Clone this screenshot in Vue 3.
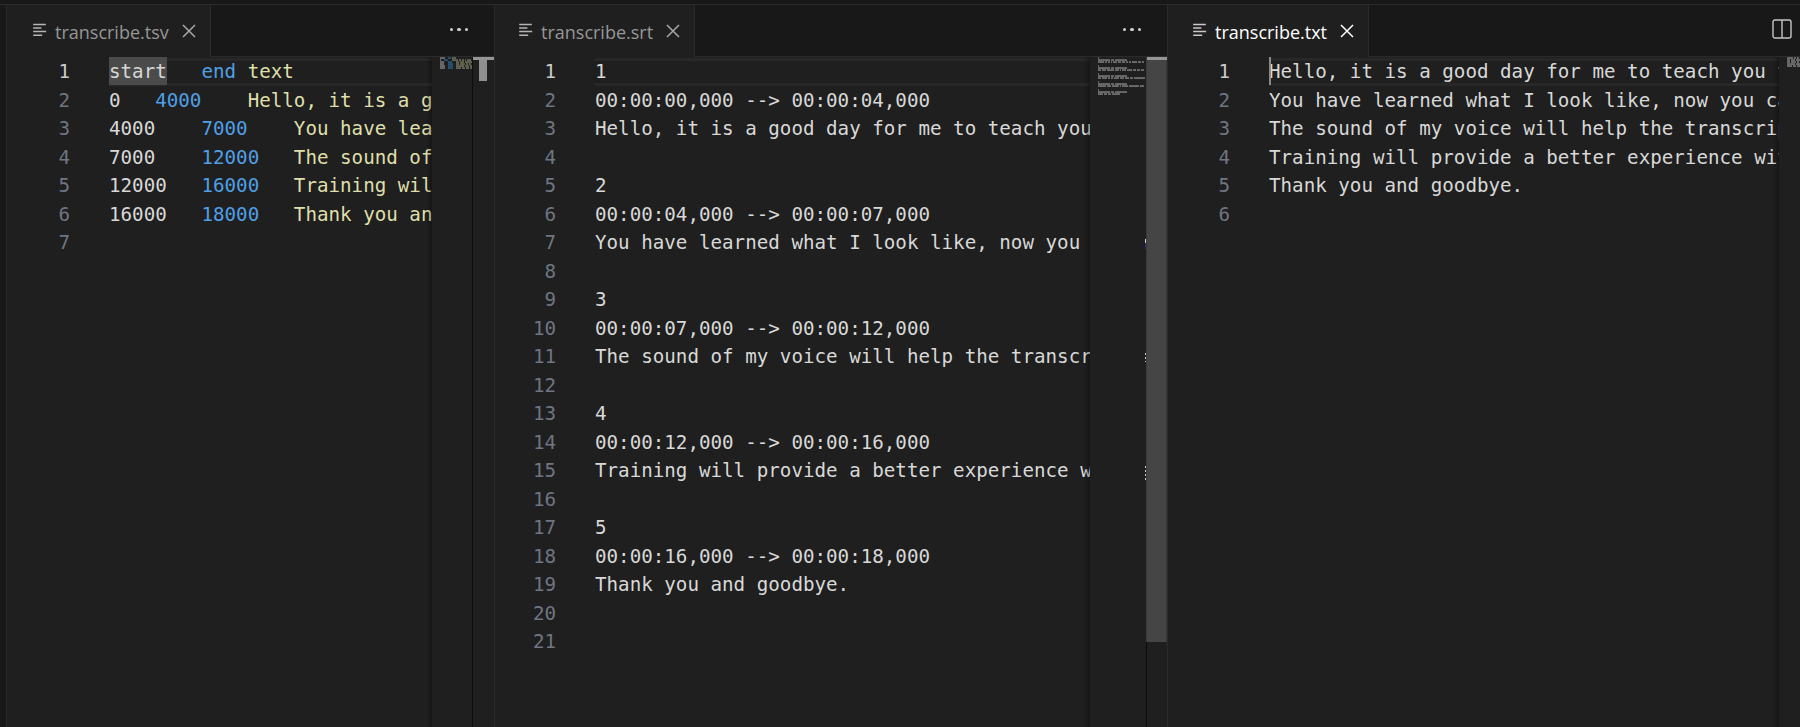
<script setup>
const speech = [
  'Hello, it is a good day for me to teach you to transcribe your voice',
  'You have learned what I look like, now you can hear how I sound',
  'The sound of my voice will help the transcription service learn',
  'Training will provide a better experience with your own data',
  'Thank you and goodbye.'
]
const times = [
  ['0', '4000'],
  ['4000', '7000'],
  ['7000', '12000'],
  ['12000', '16000'],
  ['16000', '18000']
]
const stamp = (ms) => `00:00:${String(ms / 1000).padStart(2, '0')},000`
const tsv = [
  [['start\t', 'w'], ['end', 'b'], ['\t', 'w'], ['text', 'y']],
  ...times.map((t, i) => [[t[0] + '\t', 'w'], [t[1], 'b'], ['\t', 'w'], [speech[i], 'y']]),
  []
]
const plain = (l) => (l ? [[l, 'w']] : [])
const srt = []
times.forEach((t, i) => {
  srt.push(plain(String(i + 1)))
  srt.push(plain(`${stamp(+t[0])} --> ${stamp(+t[1])}`))
  srt.push(plain(speech[i]))
  srt.push([])
})
srt.push([])
const txt = [...speech.map(plain), []]

const panes = [
  { name: 'transcribe.tsv', lines: tsv, active: false, selection: 'sel', kind: 'tsv', scroll: 'small', mapW: 32 },
  { name: 'transcribe.srt', lines: srt, active: false, selection: 'line', kind: 'srt', scroll: 'tall', mapW: 47 },
  { name: 'transcribe.txt', lines: txt, active: true, selection: 'caret', kind: 'txt', scroll: 'none', mapW: 13 }
]
const mapColor = { w: '#a8a8a8', b: '#2f78b0', y: '#98987c' }
function mapBars(pane) {
  const out = []
  pane.lines.forEach((line, row) => {
    let col = 0
    line.forEach(([text, tone]) => {
      for (const ch of text) {
        if (ch === '\t') {
          col += 4 - (col % 4)
        } else {
          if (ch !== ' ' && col < pane.mapW) {
            out.push({ x: col, y: 0.4 + row * 2, c: mapColor[tone] })
          }
          col += 1
        }
      }
    })
  })
  return out
}
</script>

<template>
  <div class="window">
    <section v-for="p in panes" :key="p.name" class="pane" :class="[p.kind, { focused: p.active }]">
      <header class="tabbar">
        <div class="tab" :class="{ active: p.active }">
          <svg class="file" width="16" height="16" viewBox="0 0 16 16" aria-hidden="true">
            <path d="M1.2 1.5h12.6M1.2 5h8.2M1.2 8.5h13M1.2 12.2h9" stroke="currentColor" stroke-width="1.6" fill="none" />
          </svg>
          <span class="tab-name">{{ p.name }}</span>
          <svg class="close" width="16" height="16" viewBox="0 0 16 16" aria-hidden="true">
            <path d="M2 2l12 12M14 2L2 14" stroke="currentColor" stroke-width="1.5" fill="none" />
          </svg>
        </div>
        <div class="spacer"></div>
        <svg v-if="p.active" class="split" width="20" height="20" viewBox="0 0 20 20" aria-hidden="true">
          <rect x="1" y="1" width="18" height="18" rx="2" stroke="currentColor" stroke-width="1.4" fill="none" />
          <path d="M10 1v18" stroke="currentColor" stroke-width="1.4" />
        </svg>
        <div v-else class="more" aria-hidden="true"><i></i><i></i><i></i></div>
      </header>
      <div class="body">
        <div class="editor">
          <div v-for="(line, i) in p.lines" :key="i" class="row" :class="{ current: i === 0 }">
            <span class="num">{{ i + 1 }}</span>
            <span class="code"><template v-if="i === 0 && p.selection === 'sel'"><mark class="sel">start</mark>{{ '\t' }}<span class="b">end</span>{{ '\t' }}<span class="y">text</span></template><template v-else><i v-if="i === 0 && p.selection === 'caret'" class="caret"></i><span v-for="(s, k) in line" :key="k" :class="s[1]">{{ s[0] }}</span></template></span>
          </div>
        </div>
        <aside class="minimap">
          <svg class="mini" :width="p.mapW" height="50" aria-hidden="true">
            <rect v-for="(b, i) in mapBars(p)" :key="i" :x="b.x" :y="b.y" width="0.8" height="1.3" :fill="b.c" />
          </svg>
          <template v-if="p.kind === 'srt'">
            <i class="artefact a1"></i><i class="artefact a2"></i><i class="artefact a3"></i>
          </template>
        </aside>
        <div v-if="p.scroll !== 'none'" class="scroll">
          <div class="cap"></div>
          <div v-if="p.scroll === 'small'" class="thumb-small"></div>
          <div v-else class="thumb-tall"></div>
        </div>
      </div>
    </section>
  </div>
</template>

<style>
html, body { margin: 0; background: #181818; overflow: hidden; }
</style>

<style scoped>
.window {
  display: flex;
  width: 1800px;
  height: 727px;
  box-sizing: border-box;
  padding-top: 4px;
  background: #181818;
  position: relative;
}
.window::before {
  content: "";
  position: absolute;
  left: 0;
  right: 0;
  top: 4px;
  height: 1px;
  background: #2b2b2b;
}
.pane {
  display: flex;
  flex-direction: column;
  height: 723px;
  min-width: 0;
  box-sizing: border-box;
  border-left: 1px solid #2b2b2b;
  --gutter: 102px;
  --editor: 425px;
  --map: 40px;
  --tab-pad: 25px;
}
.tsv { width: 488px; margin-left: 6px; }
.srt { width: 673px; --gutter: 100px; --editor: 595px; --map: 56px; --tab-pad: 23px; }
.txt { flex: 1; --gutter: 101px; --editor: 611px; --map: 21px; --tab-pad: 24px; }
.tabbar {
  display: flex;
  align-items: stretch;
  height: 53px;
  box-sizing: border-box;
  background: #181818;
  border-bottom: 1px solid #2b2b2b;
  flex: none;
}
.tab {
  display: flex;
  align-items: center;
  box-sizing: border-box;
  margin-top: 1px;
  margin-bottom: -1px;
  padding: 2px 13px 0 var(--tab-pad);
  background: #1f1f1f;
  border-right: 1px solid #2b2b2b;
  color: #969696;
  font: 18px "Open Sans", "Noto Sans", sans-serif;
}
.tab.active {
  color: #ffffff;
  border-top: 1px solid #0078d4;
  margin-top: 0;
}
.file { flex: none; color: #b5b5b5; margin: -2px 7px 0 0; }
.active .file { color: #c8c8c8; }
.tab-name { white-space: nowrap; }
.close { flex: none; margin: -2px 0 0 12px; color: #a8a8a8; }
.active .close { color: #fff; }
.spacer { flex: 1; }
.more { display: flex; align-items: center; gap: 4px; padding: 0 26px 1px 0; }
.more i { width: 3.5px; height: 3.5px; border-radius: 50%; background: #d0d0d0; }
.split { align-self: center; margin: 0 8px 2px 0; color: #c5c5c5; }
.body { display: flex; flex: 1; min-height: 0; background: #1f1f1f; }
.editor {
  flex: none;
  width: var(--editor);
  height: 100%;
  overflow: hidden;
  font: 19.2px/30.5px "DejaVu Sans Mono", monospace;
  color: #d8d8d8;
}
.row { display: flex; height: 28.5px; position: relative; }
.row.current::before {
  content: "";
  position: absolute;
  left: var(--gutter);
  right: 0;
  top: 1px;
  height: 28px;
  box-sizing: border-box;
  border-top: 3px solid #282828;
  border-bottom: 3px solid #282828;
}
.num {
  flex: none;
  width: calc(var(--gutter) - 39px);
  margin-right: 39px;
  text-align: right;
  color: #6e7681;
}
.current .num { color: #cccccc; }
.code { position: relative; white-space: pre; tab-size: 4; }
.w { color: #d8d8d8; }
.b { color: #4f9fe6; }
.y { color: #dfdfaa; }
.sel {
  display: inline-block;
  background: linear-gradient(#4b4b4b 28px, transparent 28px);
  color: #d8d8d8;
}
.caret {
  position: absolute;
  left: 0;
  top: 0;
  width: 2px;
  height: 28px;
  background: #8a8a8a;
}
.minimap {
  position: relative;
  flex: none;
  width: var(--map);
  background: #1f1f1f;
}
.minimap::before {
  content: "";
  position: absolute;
  top: 0;
  bottom: 0;
  left: -6px;
  width: 6px;
  background: linear-gradient(to right, rgba(0, 0, 0, 0), rgba(0, 0, 0, 0.3));
}
.mini { position: absolute; top: 0; left: 8px; }
.scroll {
  position: relative;
  flex: 1;
  background: #1f1f1f;
  box-sizing: border-box;
  border-left: 1px solid #0c0c0c;
}
.cap { position: absolute; left: 0; right: 0; top: 0; height: 3px; background: #959595; z-index: 1; }
.thumb-small { position: absolute; left: 6px; width: 8px; top: 0; height: 24px; background: #8f8f8f; }
.thumb-tall {
  position: absolute;
  left: -1px;
  right: 0;
  top: 0;
  height: 585px;
  box-sizing: border-box;
  background: #454545;
  border-left: 1px solid #3a3a3a;
  border-right: 1px solid #3a3a3a;
}
.artefact { position: absolute; right: 0; width: 1.5px; }
.a1 { top: 182px; height: 10px; background: linear-gradient(#d0d0d0 40%, #262e88 40%); }
.a2 { top: 296px; height: 9px; background: repeating-linear-gradient(#c8c8c8 0 2px, transparent 2px 4px); }
.a3 { top: 409px; height: 15px; background: repeating-linear-gradient(#c8c8c8 0 2px, transparent 2px 4px); }
</style>
